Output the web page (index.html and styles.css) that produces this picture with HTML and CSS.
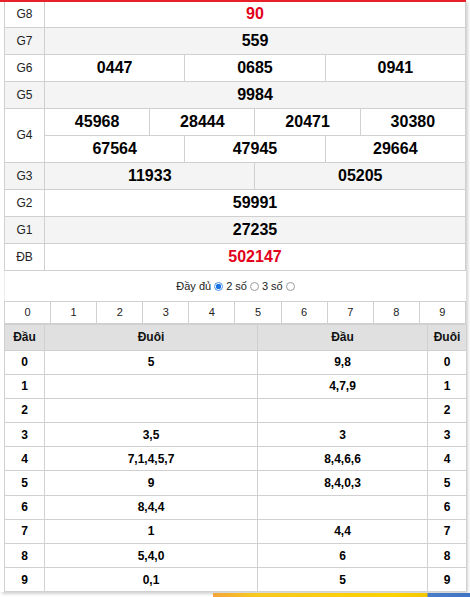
FILE: index.html
```html
<!DOCTYPE html>
<html lang="vi">
<head>
<meta charset="utf-8">
<title>KQXS</title>
<link rel="stylesheet" href="styles.css">
</head>
<body>
<div class="wrap">
  <table class="kq">
    <colgroup><col class="c-lbl"><col span="12"></colgroup>
    <tr class="r-first"><td class="g">G8</td><td colspan="12" class="n red">90</td></tr>
    <tr class="alt"><td class="g">G7</td><td colspan="12" class="n">559</td></tr>
    <tr><td class="g">G6</td><td colspan="4" class="n">0447</td><td colspan="4" class="n">0685</td><td colspan="4" class="n">0941</td></tr>
    <tr class="alt"><td class="g">G5</td><td colspan="12" class="n">9984</td></tr>
    <tr><td class="g" rowspan="2">G4</td><td colspan="3" class="n">45968</td><td colspan="3" class="n">28444</td><td colspan="3" class="n">20471</td><td colspan="3" class="n">30380</td></tr>
    <tr><td colspan="4" class="n">67564</td><td colspan="4" class="n">47945</td><td colspan="4" class="n">29664</td></tr>
    <tr class="alt"><td class="g">G3</td><td colspan="6" class="n">11933</td><td colspan="6" class="n">05205</td></tr>
    <tr><td class="g">G2</td><td colspan="12" class="n">59991</td></tr>
    <tr class="alt"><td class="g">G1</td><td colspan="12" class="n">27235</td></tr>
    <tr><td class="g">ĐB</td><td colspan="12" class="n red">502147</td></tr>
  </table>
  <div class="opts">Đầy đủ <span class="radio on"></span> 2 số <span class="radio"></span> 3 số <span class="radio"></span></div>
  <table class="digits">
    <tr><td>0</td><td>1</td><td>2</td><td>3</td><td>4</td><td>5</td><td>6</td><td>7</td><td>8</td><td>9</td></tr>
  </table>
  <table class="loto">
    <colgroup><col class="c1"><col class="c2"><col class="c3"><col class="c4"></colgroup>
    <tr class="head"><th>Đầu</th><th>Đuôi</th><th>Đầu</th><th>Đuôi</th></tr>
    <tr><td>0</td><td>5</td><td>9,8</td><td>0</td></tr>
    <tr><td>1</td><td></td><td>4,7,9</td><td>1</td></tr>
    <tr><td>2</td><td></td><td></td><td>2</td></tr>
    <tr><td>3</td><td>3,5</td><td>3</td><td>3</td></tr>
    <tr><td>4</td><td>7,1,4,5,7</td><td>8,4,6,6</td><td>4</td></tr>
    <tr><td>5</td><td>9</td><td>8,4,0,3</td><td>5</td></tr>
    <tr><td>6</td><td>8,4,4</td><td></td><td>6</td></tr>
    <tr><td>7</td><td>1</td><td>4,4</td><td>7</td></tr>
    <tr><td>8</td><td>5,4,0</td><td>6</td><td>8</td></tr>
    <tr><td>9</td><td>0,1</td><td>5</td><td>9</td></tr>
  </table>
</div>
<div class="banner"></div>
</body>
</html>
```

FILE: styles.css
```css
* { box-sizing: border-box; }
body {
  margin: 0;
  background: #fff;
  font-family: "Liberation Sans", Arial, sans-serif;
  color: #000;
}
.wrap {
  width: 466px;
  border-top: 2px solid #e8202a;
  padding-left: 4px;
  box-shadow: 2px 2px 3px rgba(0,0,0,0.18);
  background: #fff;
}
table {
  border-collapse: collapse;
  table-layout: fixed;
  width: 462px;
}
td, th {
  border: 1px solid #d0d0d0;
  padding: 0;
  text-align: center;
  vertical-align: middle;
}
.kq .c-lbl { width: 40px; }
.kq td { height: 27px; }
.kq .r-first td { height: 25px; border-top: 0; }
.kq .alt td { background: #f4f4f4; }
.kq .g {
  font-size: 12px;
  color: #222;
  background: #fff;
}
.kq .alt .g { background: #f4f4f4; }
.kq .n {
  font-size: 16px;
  font-weight: bold;
  color: #000;
}
.kq .n.red { color: #e2001a; }
.opts {
  height: 30px;
  display: flex;
  align-items: center;
  justify-content: center;
  gap: 3px;
  font-size: 11px;
  color: #222;
  border-left: 1px solid #ececec;
  padding-top: 1px;
}
.radio {
  display: inline-block;
  width: 9px;
  height: 9px;
  border-radius: 50%;
  border: 1px solid #9a9a9a;
  background: #fff;
}
.radio.on {
  border-color: #4a90e2;
  background: radial-gradient(circle, #1a73e8 0 2.5px, #fff 3px);
}
.digits td {
  height: 22px;
  font-size: 11px;
  color: #222;
}
.loto .c1 { width: 40px; }
.loto .c2 { width: 213px; }
.loto .c3 { width: 170px; }
.loto .c4 { width: 39px; }
.loto th {
  background: #e0e0e0;
  height: 26px;
  font-size: 12px;
  font-weight: bold;
  color: #111;
}
.loto td {
  height: 24.2px;
  font-size: 12px;
  font-weight: bold;
}
.banner {
  margin-left: 213px;
  margin-top: 1px;
  height: 10px;
  background: linear-gradient(90deg, #f2a53a 0, #f8c820 40px, #ffd200 180px, #f4c600 214px, #4a7cc6 215px, #3f74c4 100%);
}
```
